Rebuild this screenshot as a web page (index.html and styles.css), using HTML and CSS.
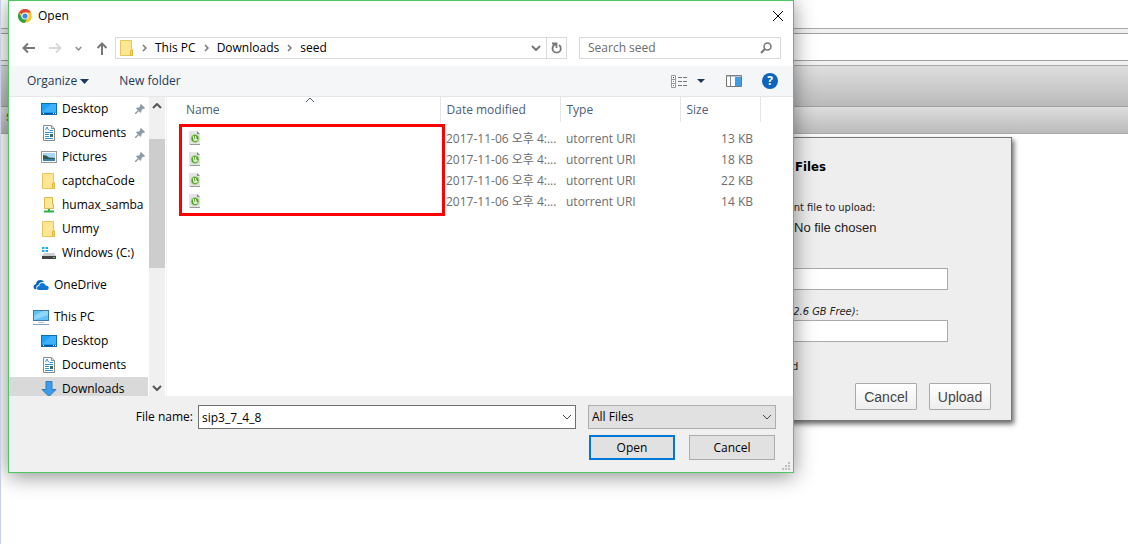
FILE: index.html
```html
<!DOCTYPE html>
<html lang="en">
<head>
    <meta charset="UTF-8">
    <meta name="viewport" content="width=device-width, initial-scale=1.0">
    <title>Upload Torrent Files</title>
    <link rel="stylesheet" href="styles.css">
</head>
<body>

    <!-- Shared icons -->
    <svg class="sprite" aria-hidden="true">
        <symbol id="i-desktop" viewBox="0 0 16 12">
            <rect x=".5" y=".5" width="15" height="11" fill="#1fa0f8" stroke="#0b6cb8"/>
            <path d="M1 9 10 1h5v8z" fill="#3fb1fb"/>
            <path d="M1 10.500h14" stroke="#0a4f8c"/>
            <path d="M2 10.500h1M12 10.500h1M14 10.500h1" stroke="#fff"/>
        </symbol>
        <symbol id="i-doc" viewBox="0 0 16 16">
            <path d="M2.500.5h8l3 3v12h-11z" fill="#fff" stroke="#8a8a8a"/>
            <path d="M10.500.5v3h3" fill="#ddd" stroke="#8a8a8a"/>
            <path d="m4.500 5 1.500-3 1.500 3M8.500 5.500H12M4 7.500h8M4 9.500h4M4 11.500h4M4 13.500h8" fill="none" stroke="#2f97dc"/>
            <path d="M9 9h3v3H9z" fill="#3c6b5c"/>
        </symbol>
        <symbol id="i-pic" viewBox="0 0 16 12">
            <rect x=".5" y=".5" width="15" height="11" fill="#fff" stroke="#9a9a9a"/>
            <path d="M2 2h12v8H2z" fill="#a9d6f5"/>
            <path d="M2 4q4 0 6 2.500L14 7v1H2z" fill="#2e5a52"/>
            <path d="M2 8h12v2H2z" fill="#3c7fb1"/>
        </symbol>
        <symbol id="i-folder" viewBox="0 0 14 16">
            <path d="M.5.5h11v9h1v6H.5z" fill="#ffe594" stroke="#e8c55a"/>
            <path d="M10.500 10.500h2v5h-2z" fill="#f9d768" stroke="#e0b83f"/>
        </symbol>
        <symbol id="i-netfolder" viewBox="0 0 14 16">
            <path d="M2.500.5h8v7h1v4h-9z" fill="#ffe594" stroke="#dcb84a"/>
            <path d="M7 12v3M2 14.500h10" stroke="#2fae4a" stroke-width="2"/>
        </symbol>
        <symbol id="i-drive" viewBox="0 0 16 14">
            <path d="M1 1h2.500v2H1zM4.500 1H7v2H4.500zM1 4h2.500v2H1zM4.500 4H7v2H4.500z" fill="#16b0f0"/>
            <path d="m3 7-2 3h14l-2-3z" fill="#cfcfcf"/>
            <path d="M1 10h14v3H1z" fill="#444"/>
            <path d="M12 11h2v1h-2z" fill="#4fe04f"/>
        </symbol>
        <symbol id="i-cloud" viewBox="0 0 16 12">
            <path d="M1 9.500Q-.5 6 3 5q.5-4 4.500-4 2.500 0 3.500 2-5-.5-5.500 3-3 .5-2 4Q1.500 10.500 1 9.500z" fill="#0a63b8"/>
            <path d="M6 11q-2.500-.5-2-2.500.4-1.500 2.200-1.500Q6.500 4 9.500 4q2.500 0 3.200 2.500 3.300.3 3 2.700-.3 1.800-2 1.800z" fill="#0f78d4"/>
        </symbol>
        <symbol id="i-pc" viewBox="0 0 16 15">
            <rect x=".5" y=".5" width="15" height="10" fill="#63c1f7" stroke="#3b7ba8"/>
            <path d="M1 10V6l9-5h5v4z" fill="#8fd6fb"/>
            <path d="M5 12.500h6" stroke="#b7c2cc"/>
            <path d="M0 14.500h16" stroke="#8da0b0"/>
        </symbol>
        <symbol id="i-down" viewBox="0 0 16 16">
            <path d="M5 .5h6v8h4L8 15.500 1 8.500h4z" fill="#3d9be9" stroke="#2b7cc4"/>
        </symbol>
        <symbol id="i-pin" viewBox="0 0 10 10">
            <path d="m6 0 4 4-1 1-1-.3L6.300 6.400q.4 1.600-.7 2.600L3.800 7.200 1 10H0V9l2.800-2.800L1 4.400q1-1.100 2.600-.7L5.300 2 5 1z" fill="#8c9ba8"/>
        </symbol>
        <symbol id="i-chev" viewBox="0 0 10 6">
            <path d="m1 1 4 4 4-4" fill="none" stroke="currentColor"/>
        </symbol>
        <symbol id="i-chev-bold" viewBox="0 0 10 6">
            <path d="m1 1 4 4 4-4" fill="none" stroke="currentColor" stroke-width="2"/>
        </symbol>
        <symbol id="i-sep" viewBox="0 0 5 8">
            <path d="m1 1 3 3-3 3" fill="none" stroke="#777" stroke-width="1.500"/>
        </symbol>
        <symbol id="i-torrent" viewBox="0 0 12 15">
            <path d="M0 0h8l3 3v11H0z" fill="#e4e4e4"/>
            <path d="M8 0v3h3z" fill="#888"/>
            <circle cx="6" cy="7.500" r="4" fill="#4a9f1c" stroke="#b9dba4" stroke-width=".8"/>
            <path d="M4.200 5.200 5 8.500q.3 1 1.200.8T7 8l-.6-3M7 8q.4 1.200 1.700.8" fill="none" stroke="#fff" stroke-width="1.200"/>
            <path d="M1 13.500h10" stroke="#999"/>
        </symbol>
    </svg>

    <div class="page">
        <div class="tab-strip"></div>
        <div class="address-strip"><div class="omnibox"></div></div>
        <header class="toolbar"></header>
        <div class="statusbar">Show:</div>
    </div>

    <form class="upload">
        <div class="intro">
            <h2>Upload Torrent Files</h2>
            <p class="label">Please select a torrent file to upload:</p>
        </div>
        <div class="chooser"><button type="button">Choose Files</button><span>No file chosen</span></div>
        <label class="label" for="url">Or enter a URL:</label>
        <input type="text" id="url" class="field">
        <label class="label" for="folder">Destination folder <i>(122.6 GB Free)</i>:</label>
        <input type="text" id="folder" class="field">
        <div class="start"><input type="checkbox" id="start" checked><label for="start">Start when added</label></div>
        <div class="upload-actions">
            <button type="button">Cancel</button>
            <button type="button">Upload</button>
        </div>
    </form>

    <section class="dialog" role="dialog" aria-label="Open">
        <div class="titlebar">
            <svg width="14" height="14" viewBox="0 0 14 14">
                <circle cx="7" cy="7" r="7" fill="#fbcb2f"/>
                <path d="M7 7 .9 3.500A7 7 0 0 1 13.100 3.500H7z" fill="#de4a3c"/>
                <path d="M.9 3.500A7 7 0 0 0 6.500 14L10 8.700 7 7 4 8.700z" fill="#2ba24c"/>
                <circle cx="7" cy="7" r="3.500" fill="#fff"/>
                <circle cx="7" cy="7" r="2.600" fill="#4285f4"/>
            </svg>
            <span class="title">Open</span>
            <button type="button" class="icon-btn" aria-label="Close">
                <svg width="12" height="12" viewBox="0 0 12 12"><path d="m1 1 10 10M11 1 1 11" stroke="#000"/></svg>
            </button>
        </div>

        <div class="nav">
            <div class="nav-arrows">
                <svg width="13" height="12" viewBox="0 0 13 12"><path d="M13 6H1.500M6 1.500 1.500 6 6 10.500" fill="none" stroke="#777" stroke-width="2"/></svg>
                <svg width="13" height="12" viewBox="0 0 13 12"><path d="M0 6h11.500M7 1.500 11.500 6 7 10.500" fill="none" stroke="#d9d9d9" stroke-width="2"/></svg>
                <svg class="muted" width="7" height="5"><use href="#i-chev-bold"/></svg>
                <svg width="12" height="13" viewBox="0 0 12 13"><path d="M6 13V1.500M1.500 6 6 1.500 10.500 6" fill="none" stroke="#777" stroke-width="2"/></svg>
            </div>
            <div class="crumbs">
                <svg width="14" height="16"><use href="#i-folder"/></svg>
                <svg width="5" height="8"><use href="#i-sep"/></svg>
                <a href="#">This PC</a>
                <svg width="5" height="8"><use href="#i-sep"/></svg>
                <a href="#">Downloads</a>
                <svg width="5" height="8"><use href="#i-sep"/></svg>
                <a href="#">seed</a>
                <svg class="crumbs-more" width="10" height="6"><use href="#i-chev-bold"/></svg>
                <button type="button" class="refresh" aria-label="Refresh">
                    <svg width="12" height="12" viewBox="0 0 12 12"><path d="M1 1.500h4.500V6M5.200 1.800Q1.500 3.500 1.500 6.500A4 4 0 0 0 9.800 6.500Q9.800 4.300 8 3" fill="none" stroke="#777" stroke-width="1.800"/></svg>
                </button>
            </div>
            <div class="search">
                <input type="text" placeholder="Search seed" aria-label="Search seed">
                <svg width="12" height="12" viewBox="0 0 12 12"><circle cx="7.500" cy="4.500" r="3.500" fill="none" stroke="#777" stroke-width="1.500"/><path d="M5 7 1 11" stroke="#777" stroke-width="2"/></svg>
            </div>
        </div>

        <div class="commands">
            <button type="button">Organize <svg width="9" height="5" viewBox="0 0 9 5"><path d="M0 0h9L4.500 5z" fill="#1e395b"/></svg></button>
            <button type="button">New folder</button>
            <div class="views">
                <svg width="17" height="13" viewBox="0 0 17 13">
                    <path d="M.5.500h4v12h-4zM0 4.500h5M0 8.500h5" fill="#fff" stroke="#999"/>
                    <path d="M7 2.500h4M12 2.500h4M7 6.500h4M12 6.500h4M7 10.500h4M12 10.500h4" stroke="#777"/>
                    <path d="M2 2h1v1H2z" fill="#333"/><path d="M2 6h1v1H2z" fill="#2f97dc"/><path d="M2 10h1v1H2z" fill="#d33"/>
                </svg>
                <svg width="8" height="4" viewBox="0 0 8 4"><path d="M0 0h8L4 4z" fill="#1e395b"/></svg>
                <svg class="preview" width="16" height="12" viewBox="0 0 16 12">
                    <path d="M.5.5h15v11H.5z" fill="#fff" stroke="#777"/>
                    <path d="M0 1h16M4.500 1v11" stroke="#888"/><path d="M9 2h6v9H9z" fill="#3f9de8"/>
                </svg>
                <button type="button" class="help" aria-label="Help">?</button>
            </div>
        </div>

        <div class="explorer">
            <nav class="tree">
                <a class="child" href="#"><svg width="16" height="12"><use href="#i-desktop"/></svg>Desktop<svg class="pin" width="10" height="10"><use href="#i-pin"/></svg></a>
                <a class="child" href="#"><svg width="16" height="16"><use href="#i-doc"/></svg>Documents<svg class="pin" width="10" height="10"><use href="#i-pin"/></svg></a>
                <a class="child" href="#"><svg width="16" height="12"><use href="#i-pic"/></svg>Pictures<svg class="pin" width="10" height="10"><use href="#i-pin"/></svg></a>
                <a class="child" href="#"><svg width="16" height="16"><use href="#i-folder"/></svg>captchaCode</a>
                <a class="child" href="#"><svg width="16" height="16"><use href="#i-netfolder"/></svg>humax_samba</a>
                <a class="child" href="#"><svg width="16" height="16"><use href="#i-folder"/></svg>Ummy</a>
                <a class="child" href="#"><svg width="16" height="14"><use href="#i-drive"/></svg>Windows (C:)</a>
                <a class="root" href="#"><svg width="16" height="12"><use href="#i-cloud"/></svg>OneDrive</a>
                <a class="root" href="#"><svg width="16" height="15"><use href="#i-pc"/></svg>This PC</a>
                <a class="child" href="#"><svg width="16" height="12"><use href="#i-desktop"/></svg>Desktop</a>
                <a class="child" href="#"><svg width="16" height="16"><use href="#i-doc"/></svg>Documents</a>
                <a class="child selected" href="#"><svg width="16" height="16"><use href="#i-down"/></svg>Downloads</a>
            </nav>
            <div class="scrollbar">
                <svg class="flip" width="10" height="6"><use href="#i-chev-bold"/></svg>
                <div class="thumb"></div>
                <svg width="10" height="6"><use href="#i-chev-bold"/></svg>
            </div>
            <div class="files">
                <table>
                    <thead>
                        <tr>
                            <th class="col-name">Name<svg class="sort" width="10" height="6"><use href="#i-chev"/></svg></th>
                            <th class="col-date">Date modified</th>
                            <th class="col-type">Type</th>
                            <th class="col-size">Size</th>
                            <th></th>
                        </tr>
                    </thead>
                    <tbody>
                        <tr><td class="name"><svg width="12" height="15"><use href="#i-torrent"/></svg></td><td>2017-11-06 오후 4:...</td><td>utorrent URI</td><td class="size">13 KB</td><td></td></tr>
                        <tr><td class="name"><svg width="12" height="15"><use href="#i-torrent"/></svg></td><td>2017-11-06 오후 4:...</td><td>utorrent URI</td><td class="size">18 KB</td><td></td></tr>
                        <tr><td class="name"><svg width="12" height="15"><use href="#i-torrent"/></svg></td><td>2017-11-06 오후 4:...</td><td>utorrent URI</td><td class="size">22 KB</td><td></td></tr>
                        <tr><td class="name"><svg width="12" height="15"><use href="#i-torrent"/></svg></td><td>2017-11-06 오후 4:...</td><td>utorrent URI</td><td class="size">14 KB</td><td></td></tr>
                    </tbody>
                </table>
                <div class="highlight"></div>
            </div>
        </div>

        <div class="footer">
            <label for="filename">File name:</label>
            <div class="combo">
                <input type="text" id="filename" value="sip3_7_4_8">
                <svg width="10" height="6"><use href="#i-chev"/></svg>
            </div>
            <div class="combo">
                <select aria-label="File type"><option>All Files</option></select>
                <svg width="10" height="6"><use href="#i-chev"/></svg>
            </div>
            <div class="footer-actions">
                <button type="button" class="default">Open</button>
                <button type="button">Cancel</button>
            </div>
        </div>
        <svg class="grip" width="8" height="8" viewBox="0 0 8 8"><path d="M6 0h2v2H6zM3 3h2v2H3zM6 3h2v2H6zM0 6h2v2H0zM3 6h2v2H3zM6 6h2v2H6z" fill="#bfbfbf"/></svg>
    </section>

</body>
</html>
```
FILE: styles.css
```css
* {
    box-sizing: border-box;
}
body {
    margin: 0;
    min-height: 100vh;
    overflow: hidden;
    position: relative;
    background: #fff;
    border-left: 1px solid #c5d0e6;
    font: 12px/16px "Open Sans", "Noto Sans CJK KR", sans-serif;
    color: #000;
}
svg {
    display: block;
    flex-shrink: 0;
}
button, input, select {
    font: inherit;
    color: inherit;
    margin: 0;
}
a {
    color: inherit;
    text-decoration: none;
}
.sprite {
    position: absolute;
    width: 0;
    height: 0;
}

/* --- Browser page behind the dialog --- */
.tab-strip {
    height: 29px;
    border-bottom: 1px solid #a9a9a9;
}
.address-strip {
    height: 37px;
    padding: 4px 0;
    background: #f2f1f1;
    border-bottom: 1px solid #a9a9a9;
}
.omnibox {
    height: 28px;
    background: #fff;
    border: solid #a0a0a0;
    border-width: 1px 0;
}
.toolbar {
    height: 41px;
    background: linear-gradient(#dedede, #bababa);
    border-bottom: 1px solid #a0a0a0;
}
.statusbar {
    height: 27px;
    padding: 3px 5px;
    background: linear-gradient(#dedede, #bababa);
    border-bottom: 1px solid #a9a9a9;
    font: bold 10px/16px "DejaVu Sans Condensed", sans-serif;
    color: #4c8a10;
}
.upload {
    position: absolute;
    top: 137px;
    right: 116px;
    width: 420px;
    padding: 20px 20px 10px 92px;
    background: #eee;
    border: 1px solid #777;
    box-shadow: 2px 3px 5px rgba(0, 0, 0, 0.6);
    font: 11px/16px "DejaVu Sans Condensed", sans-serif;
    color: #222;
}
.intro {
    padding-left: 8px;
}
.upload h2 {
    margin: 0 0 24px;
    font-size: 13px;
    line-height: 18px;
    color: #000;
}
.upload .label {
    display: block;
    margin: 0;
}
.upload .field {
    display: block;
    width: 263px;
    height: 22px;
    margin-bottom: 14px;
    border: 1px solid #aaa;
    background: #fff;
}
.chooser {
    display: flex;
    gap: 6px;
    margin-bottom: 10px;
    padding-top: 2px;
    font: 13px/20px "Liberation Sans", sans-serif;
}
.chooser button {
    width: 103px;
    padding: 0;
}
.start {
    display: flex;
    align-items: center;
    gap: 12px;
    height: 22px;
}
.upload-actions {
    display: flex;
    justify-content: flex-end;
    gap: 12px;
    margin-top: 5px;
}
.upload-actions button {
    width: 62px;
    height: 27px;
    padding: 0;
    border: 1px solid #aaa;
    border-radius: 1px;
    background: linear-gradient(#fff, #eee);
    font: 14px/16px "Liberation Sans", sans-serif;
    color: #444;
}

/* --- Open dialog --- */
.dialog {
    position: absolute;
    top: 0;
    left: 7px;
    width: 786px;
    max-width: calc(100% - 14px);
    border: 1px solid #4cc764;
    background: #fff;
    box-shadow: 0 3px 20px rgba(0, 0, 0, 0.45);
}
.titlebar {
    display: flex;
    align-items: center;
    gap: 6px;
    height: 30px;
    padding: 0 9px;
}
.title {
    flex: 1;
}
.icon-btn {
    padding: 0;
    border: 0;
    background: none;
}
.nav {
    display: flex;
    height: 35px;
    padding: 6px 12px 7px 13px;
}
.nav-arrows {
    display: flex;
    align-items: center;
    justify-content: space-between;
    width: 86px;
    margin-right: 7px;
}
.muted {
    color: #888;
}
.crumbs {
    display: flex;
    flex: 1;
    align-items: center;
    gap: 8px;
    padding-left: 4px;
    border: 1px solid #d9d9d9;
}
.crumbs-more {
    margin-left: auto;
    margin-right: -3px;
    color: #777;
}
.refresh {
    display: flex;
    align-items: center;
    align-self: stretch;
    width: 20px;
    padding: 0 4px;
    border: 0;
    border-left: 1px solid #d9d9d9;
    background: none;
}
.search {
    display: flex;
    align-items: center;
    width: 202px;
    margin-left: 12px;
    padding: 0 8px;
    border: 1px solid #d9d9d9;
}
.search input {
    flex: 1;
    min-width: 0;
    padding: 0;
    border: 0;
    outline: 0;
}
.search input::placeholder {
    color: #6d6d6d;
}
.commands {
    display: flex;
    align-items: center;
    gap: 30px;
    height: 31px;
    padding: 0 15px 0 18px;
    background: #f5f6f7;
    border-bottom: 1px solid #e5e8ea;
    color: #1e395b;
}
.commands button {
    display: flex;
    align-items: center;
    gap: 3px;
    padding: 0;
    border: 0;
    background: none;
}
.views {
    display: flex;
    align-items: center;
    gap: 9px;
    margin-left: auto;
}
.preview {
    margin: 0 11px 0 12px;
}
.commands .help {
    justify-content: center;
    width: 16px;
    height: 16px;
    border-radius: 50%;
    background: #0a64c0;
    font-weight: bold;
    color: #fff;
}
.explorer {
    display: flex;
    height: 299px;
    overflow: hidden;
}
.tree {
    width: 139px;
    overflow: hidden;
}
.tree a {
    display: flex;
    align-items: center;
    gap: 5px;
    height: 24px;
    white-space: nowrap;
}
.tree .child {
    padding: 0 3px 0 32px;
}
.tree .root {
    margin: 8px 0;
    padding-left: 24px;
}
.tree .root + .root {
    margin-bottom: 0;
}
.tree .selected {
    background: #d9d9d9;
}
.pin {
    margin-left: auto;
}
.scrollbar {
    display: flex;
    flex-direction: column;
    justify-content: space-between;
    align-items: center;
    width: 16px;
    margin-left: 1px;
    padding: 6px 0 5px;
    background: #f0f0f0;
    color: #555;
}
.flip {
    transform: scaleY(-1);
}
.thumb {
    width: 16px;
    height: 129px;
    margin: 30px 0 auto;
    background: #cdcdcd;
}
.files {
    position: relative;
    flex: 1;
    margin-left: 1px;
    border-left: 1px solid #f3f3f3;
}
table {
    width: 100%;
    table-layout: fixed;
    border-collapse: collapse;
    color: #6d6d6d;
}
th, td {
    padding: 0 6px;
    text-align: left;
    font-weight: normal;
    white-space: nowrap;
}
th {
    position: relative;
    height: 25px;
    border-right: 1px solid #e5e5e5;
    color: #4c607a;
}
th:last-child {
    border-right: 0;
}
td {
    height: 21px;
}
tbody::before {
    content: "";
    display: block;
    height: 6px;
}
.col-name {
    width: 273px;
    padding-left: 19px;
}
.col-date, .col-type {
    width: 120px;
}
.col-size {
    width: 80px;
}
.sort {
    position: absolute;
    top: 0;
    left: 138px;
    transform: scaleY(-1);
}
.name {
    padding-left: 22px;
}
.size {
    padding-right: 7px;
    text-align: right;
}
.highlight {
    position: absolute;
    top: 27px;
    left: 12px;
    width: 266px;
    height: 92px;
    border: 3px solid #f00;
}
.footer {
    display: grid;
    grid-template-columns: 184px 1fr 188px;
    column-gap: 12px;
    row-gap: 6px;
    padding: 9px 17px 12px 0;
    background: #f0f0f0;
}
.footer label {
    align-self: center;
    text-align: right;
}
.combo {
    position: relative;
    height: 24px;
}
.footer label + .combo {
    margin-left: -7px;
}
.combo svg {
    position: absolute;
    top: 9px;
    right: 4px;
    color: #444;
}
.combo input, .combo select {
    width: 100%;
    height: 24px;
    padding: 0 3px;
    border: 1px solid #707070;
    border-radius: 0;
    background: #fff;
}
.combo select {
    appearance: none;
    border-color: #adadad;
    background: #e1e1e1;
}
.footer-actions {
    display: flex;
    grid-column: 3;
    justify-content: space-between;
    padding: 0 1px;
}
.footer-actions button {
    width: 86px;
    height: 25px;
    padding: 0;
    border: 1px solid #adadad;
    background: #e1e1e1;
}
.footer-actions .default {
    border: 2px solid #0078d7;
}
.grip {
    position: absolute;
    right: 3px;
    bottom: 2px;
}
```
